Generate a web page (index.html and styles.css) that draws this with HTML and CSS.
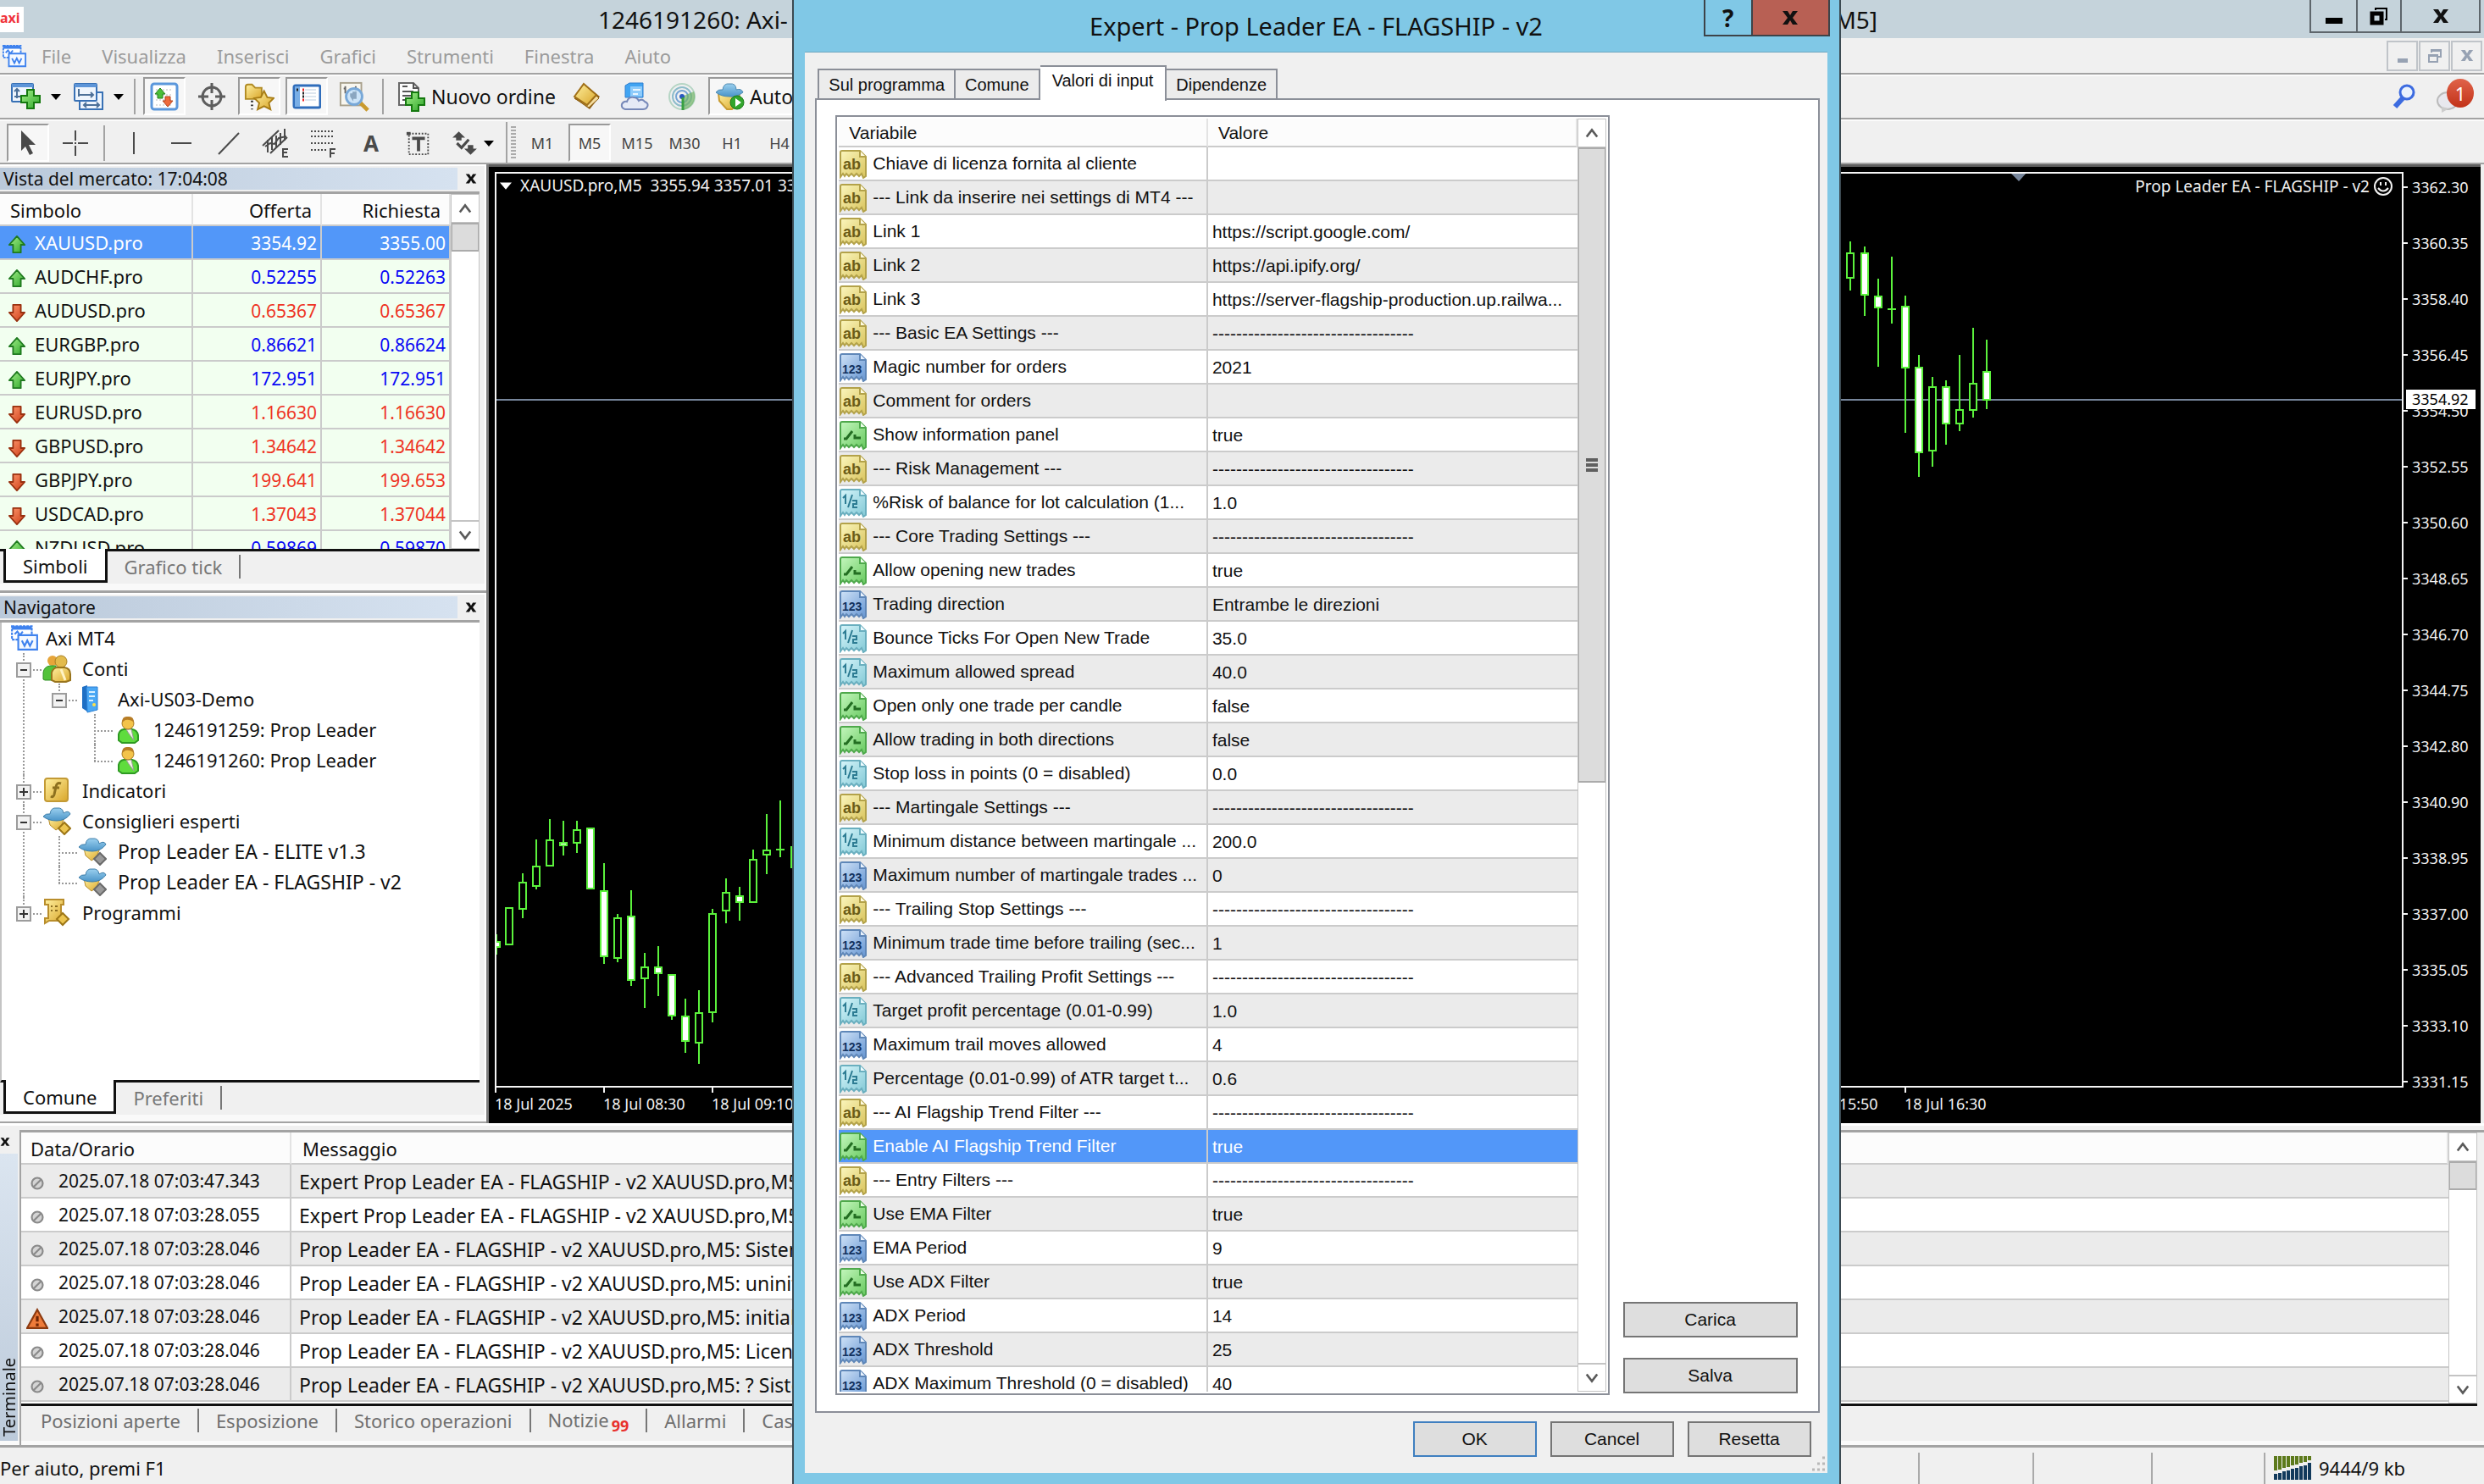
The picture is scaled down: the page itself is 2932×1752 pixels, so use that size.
FILE: index.html
```html
<!DOCTYPE html>
<html lang="it">
<head>
<meta charset="utf-8">
<title>Axi MT4</title>
<link rel="stylesheet" href="styles.css">
</head>
<body>
<svg class="sprite" aria-hidden="true">
  <defs>
    <linearGradient id="gYellow" x1="0" y1="0" x2="1" y2="1"><stop offset="0" stop-color="#fbf6bd"/><stop offset="1" stop-color="#d9c45c"/></linearGradient>
    <linearGradient id="gBlue" x1="0" y1="0" x2="1" y2="1"><stop offset="0" stop-color="#cfe2f7"/><stop offset="1" stop-color="#6595d2"/></linearGradient>
    <linearGradient id="gCyan" x1="0" y1="0" x2="1" y2="1"><stop offset="0" stop-color="#d6f5fa"/><stop offset="1" stop-color="#82c9d6"/></linearGradient>
    <linearGradient id="gGreen" x1="0" y1="0" x2="1" y2="1"><stop offset="0" stop-color="#c4f7bd"/><stop offset="1" stop-color="#67c95f"/></linearGradient>
    <linearGradient id="gGold" x1="0" y1="0" x2="1" y2="1"><stop offset="0" stop-color="#fff0a0"/><stop offset="1" stop-color="#d9a62a"/></linearGradient>
    <linearGradient id="gUp" x1="0" y1="0" x2="1" y2="1"><stop offset="0" stop-color="#a5f08a"/><stop offset="1" stop-color="#2ea62a"/></linearGradient>
    <linearGradient id="gDown" x1="0" y1="0" x2="1" y2="1"><stop offset="0" stop-color="#ff9a70"/><stop offset="1" stop-color="#cc3a14"/></linearGradient>
    <linearGradient id="gHat" x1="0" y1="0" x2="0" y2="1"><stop offset="0" stop-color="#9bd0ef"/><stop offset="1" stop-color="#4a94c8"/></linearGradient>
    <path id="sheet" d="M1 3Q1 1 3 1H24L31 8V31L28 33L26 28L23 31L20 28L17 31L14 28L11 31L8 28L6 31L4 28L1 32Z"/>
  </defs>
  <symbol id="t-ab" viewBox="0 0 32 34"><use href="#sheet" fill="url(#gYellow)" stroke="#b3a24a" stroke-width="2"/><path d="M24 1V8H31" fill="#fffbe0" stroke="#b3a24a" stroke-width="2"/><text x="4" y="23" font-size="18" font-weight="bold" fill="#6b5c17">ab</text></symbol>
  <symbol id="t-int" viewBox="0 0 32 34"><use href="#sheet" fill="url(#gBlue)" stroke="#5f87b8" stroke-width="2"/><path d="M24 1V8H31" fill="#eaf3fd" stroke="#5f87b8" stroke-width="2"/><text x="3" y="24" font-size="14" font-weight="bold" fill="#12325f">123</text></symbol>
  <symbol id="t-num" viewBox="0 0 32 34"><use href="#sheet" fill="url(#gCyan)" stroke="#6aafbf" stroke-width="2"/><path d="M24 1V8H31" fill="#effcff" stroke="#6aafbf" stroke-width="2"/><path d="M4 11L7 8V18M15 7L10 22M15 14H20V18H16V22H21" fill="none" stroke="#2d7c93" stroke-width="2"/></symbol>
  <symbol id="t-bool" viewBox="0 0 32 34"><use href="#sheet" fill="url(#gGreen)" stroke="#4fa94c" stroke-width="2"/><path d="M24 1V8H31" fill="#ecffe9" stroke="#4fa94c" stroke-width="2"/><path d="M5 21H8L15 12M18 16V20H25" fill="none" stroke="#236e22" stroke-width="3"/></symbol>
  <symbol id="up" viewBox="0 0 24 28"><path d="M12 3L22 14H17V24H7V14H2Z" fill="url(#gUp)" stroke="#1f7a1f" stroke-width="2" stroke-linejoin="round"/></symbol>
  <symbol id="down" viewBox="0 0 24 28"><path d="M12 25L22 14H17V4H7V14H2Z" fill="url(#gDown)" stroke="#99300f" stroke-width="2" stroke-linejoin="round"/></symbol>
  <symbol id="chev-up" viewBox="0 0 18 14"><path d="M2 12L9 3L16 12" fill="none" stroke="#5a5a5a" stroke-width="3"/></symbol>
  <symbol id="chev-down" viewBox="0 0 18 14"><path d="M2 2L9 11L16 2" fill="none" stroke="#5a5a5a" stroke-width="3"/></symbol>
  <symbol id="caret" viewBox="0 0 12 8"><path d="M0 1H12L6 8Z" fill="#000"/></symbol>
  <symbol id="mt" viewBox="0 0 32 32"><path d="M2 3H24V18H2Z" fill="#fff" stroke="#3f82ee" stroke-width="2" stroke-dasharray="3 1"/><path d="M2 5H24" stroke="#3f82ee" stroke-width="4"/><path d="M5 12L8 9L11 13L14 9" fill="none" stroke="#3f82ee" stroke-width="2"/><path d="M9 13H30V29H9Z" fill="#f5f9ff" stroke="#3f82ee" stroke-width="2"/><path d="M13 19L16 25L19 19L22 25L25 19" fill="none" stroke="#3f82ee" stroke-width="2"/></symbol>
  <symbol id="plus" viewBox="0 0 24 24"><path d="M8 1H16V8H23V16H16V23H8V16H1V8H8Z" fill="url(#gUp)" stroke="#15790f" stroke-width="2"/></symbol>
  <symbol id="newchart" viewBox="0 0 36 34"><rect x="2" y="2" width="25" height="21" rx="1" fill="#eef5fd" stroke="#3871b5" stroke-width="2"/><path d="M2 4H27" stroke="#5d95d8" stroke-width="4"/><path d="M8 8V19M5 11L8 8L11 11M5 17H12" fill="none" stroke="#4d7199" stroke-width="2"/><use href="#plus" x="12" y="8" width="24" height="24"/></symbol>
  <symbol id="profiles" viewBox="0 0 36 34"><rect x="8" y="12" width="27" height="20" fill="#eef5fd" stroke="#3871b5" stroke-width="2"/><path d="M13 27H31M16 24L13 27L16 30M28 24L31 27L28 30" fill="none" stroke="#4d7199" stroke-width="2"/><rect x="2" y="2" width="26" height="20" rx="1" fill="#eef5fd" stroke="#3871b5" stroke-width="2"/><path d="M2 4H28" stroke="#5d95d8" stroke-width="4"/><path d="M7 8V17M6 15H24M21 12L24 15L21 18" fill="none" stroke="#4d7199" stroke-width="2"/></symbol>
  <symbol id="market" viewBox="0 0 34 34"><rect x="2" y="2" width="30" height="30" rx="3" fill="#fff" stroke="#5b97dc" stroke-width="3"/><path d="M7 9H27M7 15H27M7 21H27M7 27H27" stroke="#ddd" stroke-width="2" stroke-dasharray="2 2"/><path d="M12 7L18 14H15V19H9V14H6Z" fill="#4cbf38" stroke="#24801a"/><path d="M21 29L27 22H24V17H18V22H15Z" fill="#ee6a3c" stroke="#b3401a"/></symbol>
  <symbol id="target" viewBox="0 0 34 34"><g fill="none" stroke="#5d5d5d"><circle cx="17" cy="17" r="11" stroke-width="3"/><path d="M17 1V13M17 21V33M1 17H13M21 17H33" stroke-width="3"/></g></symbol>
  <symbol id="navfolder" viewBox="0 0 38 34"><path d="M2 20V5Q2 2 5 2H10L14 6H22V20Z" fill="url(#gGold)" stroke="#b08a23" stroke-width="2"/><path d="M10 22V33" stroke="#333" stroke-width="3" stroke-dasharray="2 3"/><path d="M25 10L29 18L37 19L31 25L33 33L25 29L17 33L19 25L13 19L21 18Z" fill="url(#gGold)" stroke="#a87c14" stroke-width="2"/></symbol>
  <symbol id="terminal" viewBox="0 0 34 30"><rect x="2" y="2" width="31" height="26" rx="2" fill="#fff" stroke="#2f6dbb" stroke-width="3"/><rect x="3" y="3" width="6" height="24" fill="#79aee6"/><path d="M15 7H28M15 11H28M15 15H28M15 19H28" stroke="#bcd" stroke-width="1"/><path d="M12 7H14M12 19H14" stroke="#e22" stroke-width="3"/><path d="M12 11H14M12 15H14M5 7H7" stroke="#222" stroke-width="3"/></symbol>
  <symbol id="tester" viewBox="0 0 38 36"><rect x="2" y="1" width="26" height="28" fill="#f8f6ef" stroke="#a8a08c" stroke-width="2"/><path d="M8 5V14M6 8H9M21 5V14M19 9H23" stroke="#666" stroke-width="2"/><path d="M27 26L36 35" stroke="#c99a2e" stroke-width="5"/><circle cx="19" cy="18" r="10" fill="#c8e2f8" fill-opacity=".9" stroke="#78a8d8" stroke-width="3"/><path d="M14 18V14H17V12H22V21H18V24" fill="#8ba6c0"/></symbol>
  <symbol id="order" viewBox="0 0 34 36"><path d="M2 2H19L25 8V28H2Z" fill="#fcfcfc" stroke="#686868" stroke-width="2"/><path d="M19 2V8H25M6 6H12M6 12H19M6 17H16M6 22H12" fill="none" stroke="#555" stroke-width="2"/><use href="#plus" x="9" y="12" width="24" height="24"/></symbol>
  <symbol id="book" viewBox="0 0 34 34"><path d="M2 19L13 2L32 17L20 32Z" fill="#8f5f16"/><path d="M2 19L19 30L31 19L28 16L17 27Z" fill="#f3dca0" stroke="#8f6113" stroke-width="1"/><path d="M2 17L13 2L28 15L17 27Z" fill="url(#gGold)" stroke="#a06f17" stroke-width="2"/></symbol>
  <symbol id="cloud" viewBox="0 0 34 34"><path d="M6 4L11 1H27V18H6Z" fill="#41a4f2" stroke="#2f7fd0"/><path d="M12 5H26V17H12Z" fill="#8dcbfb"/><path d="M15 9H24M15 14H21" stroke="#e8f6ff" stroke-width="2"/><path d="M6 32Q1 31 2 26Q4 22 8 23Q10 17 16 18Q20 18 22 22Q26 19 29 23Q34 25 32 29Q31 32 27 32Z" fill="#e5eaf6" stroke="#7688b8" stroke-width="2"/></symbol>
  <symbol id="signal" viewBox="0 0 34 34"><g fill="none"><circle cx="17" cy="17" r="15" stroke="#b5d5c4" stroke-width="2"/><circle cx="17" cy="17" r="11" stroke="#8dbcca" stroke-width="2"/><circle cx="17" cy="17" r="7" stroke="#75a4d4" stroke-width="2"/></g><path d="M17 17V33A16 16 0 0 0 31 11Z" fill="#70b467" opacity=".7"/><circle cx="17" cy="17" r="3" fill="#2858c0"/><path d="M18 18V33" stroke="#38a040" stroke-width="3"/></symbol>
  <symbol id="auto" viewBox="0 0 36 34"><path d="M4 13H29L28 24L20 32H14L5 22Z" fill="url(#gGold)" stroke="#c89b30" stroke-width="2"/><path d="M1 12Q4 8 9 9Q10 1 17 2Q25 1 25 9Q31 7 33 12Q26 18 17 17Q7 17 1 12Z" fill="url(#gHat)" stroke="#4d8ab2" stroke-width="1"/><circle cx="26" cy="24" r="8" fill="#32a52c" stroke="#1d7c1a"/><path d="M24 19V29L31 24Z" fill="#fff"/></symbol>
  <symbol id="cursor" viewBox="0 0 32 32"><path d="M8 1V25L13 20L18 30L22 28L17 18H25Z" fill="#4a4a4a"/></symbol>
  <symbol id="cross" viewBox="0 0 32 32"><path d="M16 1V13M16 19V31M1 16H13M19 16H31" stroke="#4a4a4a" stroke-width="2"/><path d="M15 16H17" stroke="#4a4a4a" stroke-width="2"/></symbol>
  <symbol id="vline" viewBox="0 0 32 32"><path d="M16 3V29" stroke="#4a4a4a" stroke-width="2"/></symbol>
  <symbol id="hline" viewBox="0 0 32 32"><path d="M4 16H28" stroke="#4a4a4a" stroke-width="2"/></symbol>
  <symbol id="trend" viewBox="0 0 32 32"><path d="M4 29L28 4" stroke="#4a4a4a" stroke-width="2"/></symbol>
  <symbol id="channel" viewBox="0 0 34 36"><path d="M1 21L20 3M10 30L30 11M7 14V29M12 11V26M17 9V24M22 6V20M27 1V15M4 22L10 18L15 19L20 12L29 10" fill="none" stroke="#4a4a4a" stroke-width="2"/><path d="M31 25H25V34H31M25 29H30" fill="none" stroke="#4a4a4a" stroke-width="2"/></symbol>
  <symbol id="fibo" viewBox="0 0 34 36"><path d="M2 4H30M2 10H30M2 18H30M2 26H20" stroke="#4a4a4a" stroke-width="2" stroke-dasharray="2 2"/><path d="M31 25H25V35M25 30H30" fill="none" stroke="#4a4a4a" stroke-width="2"/></symbol>
  <symbol id="label" viewBox="0 0 34 32"><path d="M5 4H29V30H5Z" fill="none" stroke="#4a4a4a" stroke-width="2" stroke-dasharray="2 2"/><path d="M2 2H7V6H2Z" fill="#4a4a4a"/><path d="M9 10H25M17 10V26" stroke="#4a4a4a" stroke-width="4"/></symbol>
  <symbol id="arrows" viewBox="0 0 30 28"><path d="M8 1L15 8H11V11H5V8H1ZM21 27L28 20H24V16H18V20H14Z" fill="#4a4a4a"/><path d="M6 14L11 19L19 10" fill="none" stroke="#4a4a4a" stroke-width="3"/></symbol>
  <symbol id="users" viewBox="0 0 34 34"><circle cx="12" cy="8" r="6" fill="#e6a53a"/><path d="M1 30V22Q2 15 9 14H16V31H3Z" fill="#52c23a" stroke="#2f8f22"/><circle cx="22" cy="9" r="7" fill="#e3bb4c" stroke="#a88022"/><path d="M11 31V22Q13 16 18 16H26Q33 17 33 24V31L28 33H15Z" fill="url(#gGold)" stroke="#98741c" stroke-width="2"/><path d="M22 18L27 31" stroke="#fff3c4" stroke-width="3"/></symbol>
  <symbol id="user" viewBox="0 0 34 34"><path d="M6 30V23Q7 18 12 17H22Q28 18 29 24V30L25 33H10Z" fill="#5fdc3e" stroke="#2e9a22" stroke-width="2"/><path d="M15 17H21L24 30L18 22Z" fill="#f5f5e8" stroke="#999"/><circle cx="17" cy="10" r="7" fill="#f3c34a" stroke="#a87a20"/><path d="M10 9Q10 1 17 2Q24 1 24 9Q20 5 14 6Z" fill="#b77d26"/></symbol>
  <symbol id="server" viewBox="0 0 34 34"><path d="M5 3L11 1V32L5 28Z" fill="#1e6fc4"/><path d="M10 3H23V30L11 33Z" fill="#4aa8f5" stroke="#2a7fd4"/><path d="M13 9H20M13 14H20M13 19H18" stroke="#d9f0ff" stroke-width="2"/><circle cx="19" cy="24" r="2" fill="#ffe14a"/></symbol>
  <symbol id="func" viewBox="0 0 34 34"><rect x="3" y="3" width="27" height="27" rx="3" fill="url(#gGold)" stroke="#c39a35" stroke-width="2"/><path d="M22 9Q17 7 16 13L14 22Q13 26 10 24M12 14H20" fill="none" stroke="#8d701f" stroke-width="3"/></symbol>
  <symbol id="ea" viewBox="0 0 34 34"><path d="M7 13H26L22 24L16 28L9 22Z" fill="url(#gGold)" stroke="#b98e2c"/><path d="M1 12Q4 8 9 9Q10 1 17 2Q24 1 25 8Q31 4 33 9Q27 17 17 17Q7 17 1 12Z" fill="url(#gHat)" stroke="#3f7faa"/><path d="M26 19L33 26L26 33L19 26Z" fill="#ecc550" stroke="#9d7617" stroke-width="2"/></symbol>
  <symbol id="ea-off" viewBox="0 0 34 34"><path d="M7 13H26L22 24L16 28L9 22Z" fill="url(#gGold)" stroke="#b98e2c"/><path d="M1 12Q4 8 9 9Q10 1 17 2Q24 1 25 8Q31 4 33 9Q27 17 17 17Q7 17 1 12Z" fill="url(#gHat)" stroke="#3f7faa"/><path d="M26 19L33 26L26 33L19 26Z" fill="#9a9a9a" stroke="#6a6a6a" stroke-width="2"/></symbol>
  <symbol id="script" viewBox="0 0 34 34"><path d="M3 2H25V8H22V18L26 27H8L3 30V24H7V8H3Z" fill="url(#gGold)" stroke="#b98e2c" stroke-width="2"/><path d="M10 10H12M15 10H18M10 15H12M15 15H18" stroke="#8b6c1f" stroke-width="2"/><path d="M24 18L31 25L24 32L17 25Z" fill="#ecc550" stroke="#9d7617" stroke-width="2"/></symbol>
  <symbol id="dot" viewBox="0 0 24 24"><circle cx="12" cy="12" r="6" fill="#d4d4d4" stroke="#8a8a8a" stroke-width="2"/><path d="M8 16L16 8" stroke="#8a8a8a" stroke-width="2"/></symbol>
  <symbol id="warn" viewBox="0 0 24 24"><path d="M12 2L23 22H1Z" fill="#ee7b3a" stroke="#8c3a10" stroke-width="2"/><path d="M12 9V15M12 17V20" stroke="#6e2505" stroke-width="3"/></symbol>
  <symbol id="x" viewBox="0 0 20 18"><path d="M1 1H7L10 6L13 1H19L13 9L19 17H13L10 12L7 17H1L7 9Z" fill="currentColor"/></symbol>
</svg>

<div class="app">
  <header class="titlebar">
    <span class="logo">axi</span>
    <span class="title-start">1246191260: Axi-</span>
    <span class="title-end">M5]</span>
    <div class="window-buttons">
      <button class="w-min" aria-label="Riduci"><svg width="20" height="8"><rect width="20" height="7" y="1"/></svg></button>
      <button class="w-max" aria-label="Ripristina"><svg width="22" height="22"><path d="M7 4V2H20V15H18" fill="none" stroke="#000" stroke-width="2"/><rect x="3" y="8" width="11" height="11" fill="none" stroke="#000" stroke-width="5"/></svg></button>
      <button class="w-close" aria-label="Chiudi"><svg width="20" height="18"><use href="#x"/></svg></button>
    </div>
  </header>

  <nav class="menubar">
    <svg class="menu-icon"><use href="#mt"/></svg>
    <button>File</button><button>Visualizza</button><button>Inserisci</button><button>Grafici</button><button>Strumenti</button><button>Finestra</button><button>Aiuto</button>
    <div class="mdi-buttons">
      <button aria-label="Riduci grafico"><svg width="14" height="18"><rect x="1" y="12" width="12" height="5" fill="#97a2b3"/></svg></button>
      <button aria-label="Ripristina grafico"><svg width="18" height="18"><path d="M5 5V2H16V10H13M5 3H16M2 8H12V16H2ZM2 9H12" fill="none" stroke="#97a2b3" stroke-width="2"/></svg></button>
      <button aria-label="Chiudi grafico"><svg width="16" height="15"><use href="#x"/></svg></button>
    </div>
  </nav>

  <div class="toolbar">
    <button class="tool split" aria-label="Nuovo grafico"><svg class="i36"><use href="#newchart"/></svg><svg class="caret"><use href="#caret"/></svg></button>
    <button class="tool split" aria-label="Profili"><svg class="i36"><use href="#profiles"/></svg><svg class="caret"><use href="#caret"/></svg></button>
    <span class="sep"></span>
    <button class="tool pressed" aria-label="Vista del mercato"><svg class="i34"><use href="#market"/></svg></button>
    <button class="tool" aria-label="Finestra dati"><svg class="i34"><use href="#target"/></svg></button>
    <button class="tool pressed" aria-label="Navigatore"><svg class="i36"><use href="#navfolder"/></svg></button>
    <button class="tool pressed" aria-label="Terminale"><svg class="i34"><use href="#terminal"/></svg></button>
    <button class="tool" aria-label="Tester"><svg class="i36"><use href="#tester"/></svg></button>
    <span class="sep"></span>
    <button class="tool text"><svg class="i36"><use href="#order"/></svg>Nuovo ordine</button>
    <button class="tool" aria-label="Editor"><svg class="i34"><use href="#book"/></svg></button>
    <button class="tool" aria-label="VPS"><svg class="i34"><use href="#cloud"/></svg></button>
    <button class="tool" aria-label="Segnali"><svg class="i34"><use href="#signal"/></svg></button>
    <button class="tool text pressed"><svg class="i36"><use href="#auto"/></svg>Auto</button>
    <div class="toolbar-end">
      <button class="plain" aria-label="Cerca"><svg width="28" height="30"><path d="M12 17L3 27" stroke="#3c6be0" stroke-width="6"/><circle cx="17" cy="10" r="8" fill="#eaf2fd" stroke="#3c6be0" stroke-width="3"/></svg></button>
      <button class="plain notify" aria-label="Notifiche"><svg width="48" height="42"><ellipse cx="13" cy="26" rx="12" ry="10" fill="#e8e8ee" stroke="#bbb" stroke-width="2"/><path d="M6 33V40L15 35Z" fill="#ccc"/></svg><span class="badge">1</span></button>
    </div>
  </div>

  <div class="toolbar drawing">
    <button class="tool pressed" aria-label="Cursore"><svg class="i32"><use href="#cursor"/></svg></button>
    <button class="tool" aria-label="Mirino"><svg class="i32"><use href="#cross"/></svg></button>
    <span class="sep"></span>
    <button class="tool" aria-label="Linea verticale"><svg class="i32"><use href="#vline"/></svg></button>
    <button class="tool" aria-label="Linea orizzontale"><svg class="i32"><use href="#hline"/></svg></button>
    <button class="tool" aria-label="Linea di tendenza"><svg class="i32"><use href="#trend"/></svg></button>
    <button class="tool" aria-label="Canale"><svg class="i36"><use href="#channel"/></svg></button>
    <button class="tool" aria-label="Fibonacci"><svg class="i36"><use href="#fibo"/></svg></button>
    <button class="tool letter">A</button>
    <button class="tool" aria-label="Etichetta"><svg class="i32"><use href="#label"/></svg></button>
    <button class="tool arrows" aria-label="Frecce"><svg class="i32"><use href="#arrows"/></svg><svg class="caret"><use href="#caret"/></svg></button>
    <span class="sep tall"></span><span class="grip"></span>
    <button class="tool tf">M1</button><button class="tool tf pressed">M5</button><button class="tool tf">M15</button><button class="tool tf">M30</button><button class="tool tf">H1</button><button class="tool tf">H4</button>
  </div>

  <main class="workspace">
    <aside class="dock">
      <section class="panel">
        <header class="panel-head"><h2>Vista del mercato: 17:04:08</h2><button aria-label="Chiudi"><svg width="14" height="14"><use href="#x"/></svg></button></header>
        <div class="market">
          <div class="clip">
            <table class="quotes">
              <thead><tr><th>Simbolo</th><th>Offerta</th><th>Richiesta</th></tr></thead>
              <tbody>
                <tr class="selected"><td><svg><use href="#up"/></svg>XAUUSD.pro</td><td>3354.92</td><td>3355.00</td></tr>
                <tr class="rise"><td><svg><use href="#up"/></svg>AUDCHF.pro</td><td>0.52255</td><td>0.52263</td></tr>
                <tr class="fall"><td><svg><use href="#down"/></svg>AUDUSD.pro</td><td>0.65367</td><td>0.65367</td></tr>
                <tr class="rise"><td><svg><use href="#up"/></svg>EURGBP.pro</td><td>0.86621</td><td>0.86624</td></tr>
                <tr class="rise"><td><svg><use href="#up"/></svg>EURJPY.pro</td><td>172.951</td><td>172.951</td></tr>
                <tr class="fall"><td><svg><use href="#down"/></svg>EURUSD.pro</td><td>1.16630</td><td>1.16630</td></tr>
                <tr class="fall"><td><svg><use href="#down"/></svg>GBPUSD.pro</td><td>1.34642</td><td>1.34642</td></tr>
                <tr class="fall"><td><svg><use href="#down"/></svg>GBPJPY.pro</td><td>199.641</td><td>199.653</td></tr>
                <tr class="fall"><td><svg><use href="#down"/></svg>USDCAD.pro</td><td>1.37043</td><td>1.37044</td></tr>
                <tr class="rise"><td><svg><use href="#up"/></svg>NZDUSD.pro</td><td>0.59869</td><td>0.59870</td></tr>
              </tbody>
            </table>
          </div>
          <div class="scrollbar"><button aria-label="Su"><svg><use href="#chev-up"/></svg></button><span class="thumb"></span><button aria-label="Giù"><svg><use href="#chev-down"/></svg></button></div>
        </div>
        <div class="bottom-tabs"><button class="active">Simboli</button><button>Grafico tick</button></div>
      </section>

      <section class="panel grow">
        <header class="panel-head"><h2>Navigatore</h2><button aria-label="Chiudi"><svg width="14" height="14"><use href="#x"/></svg></button></header>
        <div class="tree">
          <div class="node root"><svg><use href="#mt"/></svg>Axi MT4</div>
          <ul>
            <li><span class="expander"></span><div class="node"><svg><use href="#users"/></svg>Conti</div>
              <ul>
                <li><span class="expander"></span><div class="node"><svg><use href="#server"/></svg>Axi-US03-Demo</div>
                  <ul>
                    <li><div class="node"><svg><use href="#user"/></svg>1246191259: Prop Leader</div></li>
                    <li><div class="node"><svg><use href="#user"/></svg>1246191260: Prop Leader</div></li>
                  </ul>
                </li>
              </ul>
            </li>
            <li><span class="expander closed"></span><div class="node"><svg><use href="#func"/></svg>Indicatori</div></li>
            <li><span class="expander"></span><div class="node"><svg><use href="#ea"/></svg>Consiglieri esperti</div>
              <ul class="experts">
                <li><div class="node"><svg><use href="#ea-off"/></svg>Prop Leader EA - ELITE v1.3</div></li>
                <li><div class="node"><svg><use href="#ea-off"/></svg>Prop Leader EA - FLAGSHIP - v2</div></li>
              </ul>
            </li>
            <li><span class="expander closed"></span><div class="node"><svg><use href="#script"/></svg>Programmi</div></li>
          </ul>
        </div>
        <div class="bottom-tabs"><button class="active">Comune</button><button>Preferiti</button></div>
      </section>
    </aside>

    <section class="chart">
      <div class="plot">
        <span class="chart-title"><svg class="caret"><use href="#caret"/></svg>XAUUSD.pro,M5&nbsp; 3355.94 3357.01 335</span>
        <span class="ea-title">Prop Leader EA - FLAGSHIP - v2<svg width="24" height="24"><circle cx="12" cy="12" r="10"/><path d="M6 14Q12 21 18 14M9 7V11M15 7V11"/></svg></span>
        <div class="price-line"></div>
        <svg class="candles start" width="350" height="1078"><g transform="translate(-586 -205)">
          <path class="wick" d="M586 1103V1127M617 1031V1041M617 1074V1084M633 991V1022M633 1047V1050M649 967V991M665 969V1010M681 969V979M681 996V1007M713 1019V1138M729 1079V1083M729 1132V1136M745 1051V1164M761 1125V1141M761 1156V1190M777 1117V1176M793 1150V1204M809 1179V1243M825 1169V1195M825 1232V1256M841 1073V1078M841 1196V1207M857 1037V1053M857 1076V1090M873 1047V1087M889 1003V1014M905 961V1003M905 1010V1032M921 945V1012M916 1003H926M934 999V1025"/>
          <path class="hollow" d="M597 1072H605V1115H597ZM613 1042H621V1073H613ZM629 1023H637V1046H629ZM645 992H653V1022H645ZM677 980H685V995H677ZM725 1084H733V1131H725ZM757 1142H765V1155H757ZM821 1196H829V1231H821ZM837 1079H845V1195H837ZM853 1054H861V1075H853ZM885 1015H893V1065H885ZM901 1004H909V1009H901Z"/>
          <path class="solid" d="M582 1112H590V1118H582ZM661 995H669V998H661ZM693 978H701V1049H693ZM709 1052H717V1129H709ZM741 1082H749V1157H741ZM773 1142H781V1149H773ZM789 1151H797V1199H789ZM805 1200H813V1229H805ZM869 1058H877V1065H869Z"/>
        </g></svg>
        <svg class="candles end" width="670" height="1078"><g transform="translate(-2165 -205)">
          <path d="M2373 204H2392L2383 214Z" fill="#77869b"/>
          <path class="wick" d="M2172 339V369M2184 285V298M2184 329V343M2201 291V373M2217 329V433M2233 303V382M2228 365H2238M2249 349V511M2265 419V563M2281 445V456M2281 533V551M2297 449V525M2313 419V483M2313 501V509M2329 387V452M2329 485V493M2345 401V483"/>
          <path class="hollow" d="M2180 299H2188V328H2180ZM2277 457H2285V532H2277ZM2309 484H2317V500H2309ZM2325 453H2333V484H2325Z"/>
          <path class="solid" d="M2197 299H2205V348H2197ZM2213 350H2221V363H2213ZM2245 362H2253V434H2245ZM2261 434H2269V534H2261ZM2293 457H2301V500H2293ZM2341 439H2349V472H2341Z"/>
        </g></svg>
      </div>
      <div class="prices">
        <span>3362.30</span><span>3360.35</span><span>3358.40</span><span>3356.45</span><span>3354.50</span><span>3352.55</span><span>3350.60</span><span>3348.65</span><span>3346.70</span><span>3344.75</span><span>3342.80</span><span>3340.90</span><span>3338.95</span><span>3337.00</span><span>3335.05</span><span>3333.10</span><span>3331.15</span>
        <b class="price-now">3354.92</b>
      </div>
      <div class="times"><span>18 Jul 2025</span><span>18 Jul 08:30</span><span>18 Jul 09:10</span><span class="t13">18 Jul 15:50</span><span>18 Jul 16:30</span></div>
    </section>
  </main>

  <section class="terminal">
    <div class="strip"><button aria-label="Chiudi"><svg width="12" height="12"><use href="#x"/></svg></button><h2>Terminale</h2></div>
    <div class="terminal-main">
      <div class="journal">
        <div class="clip">
          <table class="log">
            <thead><tr><th>Data/Orario</th><th>Messaggio</th></tr></thead>
            <tbody>
              <tr><td><svg><use href="#dot"/></svg>2025.07.18 07:03:47.343</td><td>Expert Prop Leader EA - FLAGSHIP - v2 XAUUSD.pro,M5</td></tr>
              <tr><td><svg><use href="#dot"/></svg>2025.07.18 07:03:28.055</td><td>Expert Prop Leader EA - FLAGSHIP - v2 XAUUSD.pro,M5</td></tr>
              <tr><td><svg><use href="#dot"/></svg>2025.07.18 07:03:28.046</td><td>Prop Leader EA - FLAGSHIP - v2 XAUUSD.pro,M5: Sistem</td></tr>
              <tr><td><svg><use href="#dot"/></svg>2025.07.18 07:03:28.046</td><td>Prop Leader EA - FLAGSHIP - v2 XAUUSD.pro,M5: uninit</td></tr>
              <tr><td><svg><use href="#warn"/></svg>2025.07.18 07:03:28.046</td><td>Prop Leader EA - FLAGSHIP - v2 XAUUSD.pro,M5: initial</td></tr>
              <tr><td><svg><use href="#dot"/></svg>2025.07.18 07:03:28.046</td><td>Prop Leader EA - FLAGSHIP - v2 XAUUSD.pro,M5: Licens</td></tr>
              <tr><td><svg><use href="#dot"/></svg>2025.07.18 07:03:28.046</td><td>Prop Leader EA - FLAGSHIP - v2 XAUUSD.pro,M5: ? Siste</td></tr>
            </tbody>
          </table>
        </div>
        <div class="scrollbar"><button aria-label="Su"><svg><use href="#chev-up"/></svg></button><span class="thumb"></span><button aria-label="Giù"><svg><use href="#chev-down"/></svg></button></div>
      </div>
      <div class="terminal-tabs"><button>Posizioni aperte</button><button>Esposizione</button><button>Storico operazioni</button><button>Notizie<sub>99</sub></button><button>Allarmi</button><button>Cas</button></div>
    </div>
  </section>

  <footer class="status">
    <span class="status-text">Per aiuto, premi F1</span>
    <span class="status-cell c1"></span><span class="status-cell c2"></span><span class="status-cell c3"></span>
    <span class="status-cell traffic"><svg width="48" height="28"><path d="M3 0V17M8 0V16M13 0V14M18 0V13M23 0V11M28 0V10M33 0V8M38 0V7M43 0V5" stroke="#5d7a1c" stroke-width="4"/><path d="M3 28V21M8 28V20M13 28V18M18 28V17M23 28V15M28 28V14M33 28V12M38 28V11M43 28V8" stroke="#123a5c" stroke-width="4"/></svg>9444/9 kb</span>
  </footer>
</div>

<div class="dialog" role="dialog" aria-label="Expert">
  <header class="dialog-title">
    <h1>Expert - Prop Leader EA - FLAGSHIP - v2</h1>
    <div class="dialog-buttons"><button class="help">?</button><button class="close" aria-label="Chiudi"><svg width="20" height="18"><use href="#x"/></svg></button></div>
  </header>
  <div class="dialog-body">
    <div class="tabs"><button>Sul programma</button><button>Comune</button><button class="active">Valori di input</button><button>Dipendenze</button></div>
    <div class="page">
      <div class="inputs-box">
        <div class="clip">
          <table class="inputs">
            <thead><tr><th>Variabile</th><th>Valore</th></tr></thead>
            <tbody>
              <tr><td><svg><use href="#t-ab"/></svg>Chiave di licenza fornita al cliente</td><td></td></tr>
              <tr><td><svg><use href="#t-ab"/></svg>--- Link da inserire nei settings di MT4 ---</td><td></td></tr>
              <tr><td><svg><use href="#t-ab"/></svg>Link 1</td><td>https://script.google.com/</td></tr>
              <tr><td><svg><use href="#t-ab"/></svg>Link 2</td><td>https://api.ipify.org/</td></tr>
              <tr><td><svg><use href="#t-ab"/></svg>Link 3</td><td>https://server-flagship-production.up.railwa...</td></tr>
              <tr><td><svg><use href="#t-ab"/></svg>--- Basic EA Settings ---</td><td>----------------------------------</td></tr>
              <tr><td><svg><use href="#t-int"/></svg>Magic number for orders</td><td>2021</td></tr>
              <tr><td><svg><use href="#t-ab"/></svg>Comment for orders</td><td></td></tr>
              <tr><td><svg><use href="#t-bool"/></svg>Show information panel</td><td>true</td></tr>
              <tr><td><svg><use href="#t-ab"/></svg>--- Risk Management ---</td><td>----------------------------------</td></tr>
              <tr><td><svg><use href="#t-num"/></svg>%Risk of balance for lot calculation (1...</td><td>1.0</td></tr>
              <tr><td><svg><use href="#t-ab"/></svg>--- Core Trading Settings ---</td><td>----------------------------------</td></tr>
              <tr><td><svg><use href="#t-bool"/></svg>Allow opening new trades</td><td>true</td></tr>
              <tr><td><svg><use href="#t-int"/></svg>Trading direction</td><td>Entrambe le direzioni</td></tr>
              <tr><td><svg><use href="#t-num"/></svg>Bounce Ticks For Open New Trade</td><td>35.0</td></tr>
              <tr><td><svg><use href="#t-num"/></svg>Maximum allowed spread</td><td>40.0</td></tr>
              <tr><td><svg><use href="#t-bool"/></svg>Open only one trade per candle</td><td>false</td></tr>
              <tr><td><svg><use href="#t-bool"/></svg>Allow trading in both directions</td><td>false</td></tr>
              <tr><td><svg><use href="#t-num"/></svg>Stop loss in points (0 = disabled)</td><td>0.0</td></tr>
              <tr><td><svg><use href="#t-ab"/></svg>--- Martingale Settings ---</td><td>----------------------------------</td></tr>
              <tr><td><svg><use href="#t-num"/></svg>Minimum distance between martingale ...</td><td>200.0</td></tr>
              <tr><td><svg><use href="#t-int"/></svg>Maximum number of martingale trades ...</td><td>0</td></tr>
              <tr><td><svg><use href="#t-ab"/></svg>--- Trailing Stop Settings ---</td><td>----------------------------------</td></tr>
              <tr><td><svg><use href="#t-int"/></svg>Minimum trade time before trailing (sec...</td><td>1</td></tr>
              <tr><td><svg><use href="#t-ab"/></svg>--- Advanced Trailing Profit Settings ---</td><td>----------------------------------</td></tr>
              <tr><td><svg><use href="#t-num"/></svg>Target profit percentage (0.01-0.99)</td><td>1.0</td></tr>
              <tr><td><svg><use href="#t-int"/></svg>Maximum trail moves allowed</td><td>4</td></tr>
              <tr><td><svg><use href="#t-num"/></svg>Percentage (0.01-0.99) of ATR target t...</td><td>0.6</td></tr>
              <tr><td><svg><use href="#t-ab"/></svg>--- AI Flagship Trend Filter ---</td><td>----------------------------------</td></tr>
              <tr class="selected"><td><svg><use href="#t-bool"/></svg>Enable AI Flagship Trend Filter</td><td>true</td></tr>
              <tr><td><svg><use href="#t-ab"/></svg>--- Entry Filters ---</td><td>----------------------------------</td></tr>
              <tr><td><svg><use href="#t-bool"/></svg>Use EMA Filter</td><td>true</td></tr>
              <tr><td><svg><use href="#t-int"/></svg>EMA Period</td><td>9</td></tr>
              <tr><td><svg><use href="#t-bool"/></svg>Use ADX Filter</td><td>true</td></tr>
              <tr><td><svg><use href="#t-int"/></svg>ADX Period</td><td>14</td></tr>
              <tr><td><svg><use href="#t-int"/></svg>ADX Threshold</td><td>25</td></tr>
              <tr><td><svg><use href="#t-int"/></svg>ADX Maximum Threshold (0 = disabled)</td><td>40</td></tr>
            </tbody>
          </table>
        </div>
        <div class="scrollbar"><button aria-label="Su"><svg><use href="#chev-up"/></svg></button><span class="thumb half"><i></i></span><button aria-label="Giù"><svg><use href="#chev-down"/></svg></button></div>
      </div>
      <div class="page-actions"><button class="btn">Carica</button><button class="btn">Salva</button></div>
    </div>
    <div class="dialog-actions"><button class="btn default">OK</button><button class="btn">Cancel</button><button class="btn">Resetta</button></div>
    <svg class="resize" width="20" height="20"><path d="M14 2H17M8 9H11M14 9H17M2 16H5M8 16H11M14 16H17" stroke="#b8b8b8" stroke-width="3"/></svg>
  </div>
</div>
</body>
</html>
```
FILE: styles.css
```css
:root {
  --face: #f0f0f0;
  --line: #cbcbcb;
  --edge: #a3a3a3;
  --select: #5297f9;
  --ui: "Noto Sans", "Open Sans", sans-serif;
  --dlg: "Liberation Sans", Arial, sans-serif;
}

* { box-sizing: border-box; }

body {
  margin: 0;
  font: 22px/28px var(--ui);
  color: #111;
  background: var(--face);
  overflow: hidden;
}

button {
  margin: 0;
  padding: 0;
  border: 0;
  background: none;
  color: inherit;
  font: inherit;
}

h1, h2 { margin: 0; font-size: inherit; font-weight: normal; }
svg { display: block; flex: none; }
table { width: 100%; border-spacing: 0; table-layout: fixed; }
th { font-weight: normal; text-align: left; }
th, td { padding: 2px 0 0; white-space: nowrap; overflow: hidden; }
.sprite { position: absolute; width: 0; height: 0; visibility: hidden; }
symbol text { font-family: "Liberation Sans", sans-serif; }

.app { display: flex; flex-direction: column; height: 100vh; }

/* Title bar */
.titlebar {
  display: flex;
  align-items: center;
  height: 45px;
  background: #c5d3db;
  font-size: 28px;
}
.logo {
  width: 28px;
  height: 30px;
  background: #fff;
  color: #f0323c;
  font: bold 16px/26px var(--ui);
}
.title-start { margin-left: 678px; }
.title-end { margin: 0 510px 0 auto; }
.window-buttons { display: flex; align-self: flex-start; height: 39px; padding-right: 4px; }
.window-buttons button {
  display: grid;
  place-items: center;
  border: 2px solid #5e666c;
  border-top: 0;
}
.window-buttons button + button { border-left: 0; }
.w-min { width: 57px; padding-top: 10px; }
.w-max { width: 52px; }
.w-close { width: 93px; }

/* Menu */
.menubar {
  display: flex;
  align-items: center;
  height: 43px;
  padding-left: 2px;
  border-bottom: 2px solid var(--edge);
  color: #9b9b9b;
}
.menubar > button { margin-right: 36px; }
.menu-icon { width: 30px; height: 30px; margin-right: 17px; }
.mdi-buttons { display: flex; gap: 1px; margin-left: auto; padding-right: 2px; }
.mdi-buttons button {
  display: grid;
  place-items: center;
  width: 37px;
  height: 36px;
  border: 2px solid #c0c4c9;
  color: #97a2b3;
}

/* Toolbars */
.toolbar {
  display: flex;
  align-items: center;
  gap: 6px;
  height: 53px;
  padding-left: 8px;
  border-bottom: 2px solid var(--edge);
  box-shadow: inset 0 2px #fbfbfb;
}
.toolbar.drawing { padding-top: 4px; }
.tool {
  display: flex;
  align-items: center;
  justify-content: center;
  width: 50px;
  height: 45px;
}
.tool.split { width: 68px; justify-content: space-between; padding: 0 4px; }
.tool.text { width: auto; gap: 5px; padding: 0 6px; font-size: 23px; }
.tool.arrows { width: 66px; gap: 6px; }
.tool.letter { font: bold 26px/30px var(--ui); color: #4a4a4a; }
.tool.tf { font-size: 18px; color: #444; }
.pressed {
  border: 2px solid #fff;
  border-top-color: #9a9a9a;
  border-left-color: #9a9a9a;
  background: #f7f7f7;
}
.sep { width: 2px; height: 42px; margin: 0 3px 0 2px; background: var(--edge); }
.sep.tall { height: 49px; margin: 0 -2px 0 0; }
.grip { width: 6px; height: 40px; background: repeating-linear-gradient(#aaa 0 2px, transparent 2px 4px); }
.i36 { width: 36px; height: 36px; }
.i34 { width: 34px; height: 34px; }
.i32 { width: 32px; height: 32px; }
.caret { width: 12px; height: 8px; }
.toolbar-end { display: flex; gap: 24px; margin-left: auto; padding-right: 8px; }
.notify { position: relative; }
.badge {
  position: absolute;
  left: 12px;
  top: 0;
  width: 32px;
  height: 34px;
  border-radius: 50%;
  background: linear-gradient(#e0634a, #c23218);
  color: #fff;
  font-size: 22px;
  line-height: 34px;
}

/* Workspace */
.workspace { display: flex; flex: 1; min-height: 0; }
.dock {
  display: flex;
  flex-direction: column;
  width: 577px;
  border-right: 3px solid #7d7d7d;
}
.panel {
  display: flex;
  flex-direction: column;
  height: 506px;
  padding: 4px 8px 0 0;
  border-bottom: 3px solid var(--edge);
  box-shadow: inset 0 2px #fff, inset -2px 0 #fff, inset 0 -8px #f9f9f9;
}
.panel.grow { flex: 1; height: auto; min-height: 0; border-bottom-width: 2px; }
.panel-head { display: flex; height: 31px; border-bottom: 3px solid var(--edge); }
.panel-head h2 {
  flex: 1;
  height: 26px;
  padding-left: 4px;
  background: linear-gradient(90deg, #bac9da, #d6e2f0);
  font-size: 21px;
  line-height: 26px;
}
.panel-head button { display: grid; place-items: center; width: 26px; height: 26px; padding-left: 6px; }
.market { display: flex; height: 422px; border-bottom: 3px solid #111; background: #fff; }
.clip { flex: 1; min-width: 0; overflow: hidden; }
th { height: 38px; background: #fcfcfc; border-bottom: 2px solid var(--line); border-right: 2px solid #e3e3e3; }
td { height: 40px; border-bottom: 2px solid var(--line); border-right: 2px solid var(--line); }
td svg { display: inline-block; vertical-align: middle; }
tr.selected td { background: var(--select); color: #fff; }
.quotes th:first-child { width: 228px; padding-left: 12px; }
.quotes th:nth-child(2) { width: 152px; }
.quotes th:not(:first-child) { text-align: right; padding-right: 10px; }
.quotes td { background: #f2fff0; }
.quotes tr.selected td { background: var(--select); }
.quotes td svg { width: 22px; height: 26px; margin: 0 10px 0 9px; }
.quotes td:not(:first-child) { text-align: right; padding-right: 4px; font-size: 21px; }
.rise td:not(:first-child) { color: #0808f5; }
.fall td:not(:first-child) { color: #ee3424; }

.scrollbar {
  display: flex;
  flex-direction: column;
  width: 34px;
  background: #fff;
  border: 1px solid #c4c4c4;
}
.scrollbar button { display: grid; place-items: center; height: 33px; flex: none; }
.scrollbar button:first-child { border-bottom: 1px solid #c4c4c4; }
.scrollbar button:last-child { margin-top: auto; border-top: 2px solid #c4c4c4; }
.scrollbar svg { width: 16px; height: 14px; }
.thumb { height: 34px; background: #dcdcdc; border: solid #ababab; border-width: 2px 1px; }
.thumb.half { display: grid; place-items: center; height: 750px; }
.thumb i { width: 14px; height: 16px; background: repeating-linear-gradient(#5f5f5f 0 4px, transparent 4px 6px); }

.bottom-tabs { display: flex; align-items: flex-start; height: 41px; padding-left: 4px; }
.grow .bottom-tabs { height: 46px; }
.bottom-tabs button { height: 28px; margin-top: 4px; padding: 0 20px; border-right: 2px solid #777; color: #777; }
.bottom-tabs .active {
  height: 40px;
  margin-top: -3px;
  padding-top: 3px;
  border: solid #111;
  border-width: 0 3px 3px;
  background: #fff;
  color: #111;
}

/* Navigator tree */
.tree { flex: 1; min-height: 0; border-bottom: 3px solid #111; border-left: 2px solid #c4c4c4; background: #fff; overflow: hidden; }
.tree ul { margin: 0; padding: 0 0 0 19px; list-style: none; }
.tree > ul { padding-left: 25px; }
.tree li { position: relative; padding-left: 23px; }
.node { display: flex; align-items: center; gap: 13px; height: 36px; }
.node svg { width: 34px; height: 34px; }
.node.root { padding-left: 10px; gap: 8px; }
.experts { font-size: 23px; }
.tree li::before { content: ""; position: absolute; left: 0; top: 0; bottom: 0; border-left: 2px dotted #999; }
.tree li:last-child::before { bottom: auto; height: 20px; }
.tree li::after { content: ""; position: absolute; left: 0; top: 19px; width: 22px; border-top: 2px dotted #999; }
.expander {
  position: absolute;
  z-index: 1;
  left: -8px;
  top: 11px;
  width: 18px;
  height: 18px;
  border: 2px solid #9c9c9c;
  background: linear-gradient(#333, #333) 50% 50% / 8px 2px no-repeat, #f2f2f2;
}
.expander.closed { background: linear-gradient(#333, #333) 50% 50% / 10px 2px no-repeat, linear-gradient(#333, #333) 50% 50% / 2px 10px no-repeat, #f2f2f2; }

/* Chart */
.chart {
  position: relative;
  flex: 1;
  display: grid;
  grid-template: 1fr 42px / 1fr 91px;
  min-width: 0;
  margin-right: 4px;
  padding: 6px 0 0 7px;
  border-top: 3px solid #5e5e5e;
  background: #000;
  color: #f2f2f2;
  font-size: 18px;
}
.plot { position: relative; border: 2px solid #f5f5f5; overflow: hidden; }
.chart-title { position: absolute; left: 4px; top: 0; display: flex; align-items: center; gap: 10px; font-size: 19px; white-space: nowrap; }
.chart-title .caret { width: 14px; height: 10px; }
.chart-title use { filter: invert(1); }
.ea-title { position: absolute; right: 10px; top: 1px; display: flex; align-items: center; gap: 4px; font-size: 19px; }
.ea-title svg { fill: none; stroke: #f2f2f2; stroke-width: 2; }
.candles { position: absolute; top: 0; }
.candles.start { left: 0; }
.candles.end { right: 0; }
.wick, .hollow, .solid { fill: none; stroke: #5bf23c; stroke-width: 2; }
.hollow { fill: #000; }
.solid { fill: #fff; }
.price-line { position: absolute; left: 0; right: 0; top: 266px; height: 2px; background: #76859a; }
.prices { position: relative; display: flex; flex-direction: column; gap: 42px; height: 0; padding-top: 6px; }
.prices span { flex: none; height: 24px; line-height: 24px; padding-left: 10px; background: linear-gradient(#f5f5f5, #f5f5f5) 0 50% / 5px 2px no-repeat; }
.price-now { position: absolute; left: 3px; top: 257px; width: 82px; height: 23px; padding-left: 7px; background: #fff; color: #000; font-weight: normal; line-height: 23px; }
.times { grid-column: 1 / -1; display: grid; grid-template-columns: repeat(17, 128px); overflow: hidden; }
.times span { padding-top: 6px; line-height: 26px; white-space: nowrap; background: linear-gradient(#f5f5f5, #f5f5f5) 0 0 / 2px 6px no-repeat; }
.times .t13 { grid-column: 13; }

/* Terminal */
.terminal { display: flex; height: 383px; padding-top: 8px; border-bottom: 3px solid var(--edge); box-shadow: inset 0 3px #fff, inset 0 -5px #fafafa; }
.strip { display: flex; flex-direction: column; width: 21px; padding-bottom: 5px; }
.strip button { width: 12px; height: 28px; }
.strip h2 {
  flex: 1;
  padding-top: 5px;
  background: linear-gradient(#bccada, #dbe5f0);
  font-size: 20px;
  line-height: 21px;
  writing-mode: vertical-rl;
  transform: rotate(180deg);
}
.terminal-main { flex: 1; min-width: 0; margin-left: 2px; padding-right: 8px; border-top: 3px solid var(--edge); border-left: 2px solid var(--edge); }
.journal { display: flex; height: 323px; border-bottom: 3px solid #111; background: #fff; }
.log th:first-child { width: 319px; padding-left: 11px; }
.log th:last-child { padding-left: 13px; }
.log tr:nth-child(odd) td { background: #ebebeb; }
.log td:first-child { font-size: 21px; }
.log td svg { width: 26px; height: 26px; margin: 0 12px 0 6px; }
.log td:last-child { padding-left: 9px; border-right: 0; font-size: 23px; }
.terminal-tabs { display: flex; align-items: center; height: 34px; padding-left: 3px; color: #6f6f6f; }
.terminal-tabs button { height: 28px; padding: 0 20px; border-right: 2px solid #777; line-height: 26px; }
.terminal-tabs sub { margin-left: 3px; color: #e8302c; font: bold 18px/18px var(--ui); }

/* Status bar */
.status { display: flex; align-items: stretch; height: 43px; }
.status-text { flex: 1; line-height: 48px; }
.status-cell { margin-top: 6px; border-left: 2px solid #aaa; }
.c1 { width: 135px; }
.c2 { width: 140px; }
.c3 { width: 133px; }
.traffic { display: flex; align-items: center; gap: 6px; width: 260px; padding: 0 0 2px 9px; }

/* Expert properties dialog, over the main window */
.dialog {
  position: absolute;
  left: 31.9%;
  top: 0;
  width: 42.2%;
  height: 100vh;
  display: flex;
  flex-direction: column;
  padding: 0 14px 13px 13px;
  border: solid #3c4a52;
  border-width: 0 2px;
  background: #80c8e6;
  font-family: var(--dlg);
  font-size: 21px;
}
.dialog-title { position: relative; height: 61px; font: 29px/61px var(--ui); text-align: center; }
.dialog-buttons { position: absolute; right: -3px; top: 0; display: flex; height: 43px; }
.dialog-buttons button { display: grid; place-items: center; border: 2px solid #3d4348; border-top: 0; font: bold 28px/40px var(--ui); }
.help { width: 58px; }
.dialog-buttons .close { width: 93px; margin-left: -2px; background: #b86054; }
.dialog-body { position: relative; flex: 1; min-height: 0; display: flex; flex-direction: column; padding: 15px 9px 19px 12px; border-top: 1px solid #6ea6bf; background: var(--face); }
.tabs { display: flex; align-items: flex-end; height: 39px; padding-left: 3px; font-size: 20px; }
.tabs button { height: 35px; padding: 0 11px; border: 2px solid #8b8f98; border-bottom: 0; background: #ececec; }
.tabs button + button { border-left: 0; }
.tabs .active { z-index: 1; height: 42px; margin-bottom: -3px; padding: 0 14px 9px; background: #fff; }
.page {
  flex: 1;
  min-height: 0;
  display: grid;
  grid-template-columns: 1fr 206px;
  gap: 16px;
  padding: 18px 24px 19px 22px;
  border: 2px solid #8b8f98;
  background: #fff;
}
.inputs-box { display: flex; min-height: 0; padding: 2px; border: 2px solid #8b8f98; }
.inputs th { height: 34px; }
.inputs th:first-child { width: 50%; padding-left: 12px; }
.inputs th:last-child { padding-left: 12px; }
.inputs tr:nth-child(even) td { background: #ebebeb; }
.inputs tr.selected td { background: var(--select); }
.inputs td svg { width: 32px; height: 34px; margin: 0 7px 0 1px; }
.inputs td:last-child { padding-left: 5px; border-right: 0; }
.page-actions { display: flex; flex-direction: column; justify-content: flex-end; gap: 24px; padding-bottom: 2px; }
.btn { height: 42px; border: 2px solid #757575; background: #dedede; }
.btn.default { border-color: #3f7fc0; }
.dialog-actions { display: flex; justify-content: flex-end; gap: 16px; padding: 10px 10px 0 0; }
.dialog-actions .btn { width: 146px; }
.resize { position: absolute; right: 0; bottom: 0; }
```
